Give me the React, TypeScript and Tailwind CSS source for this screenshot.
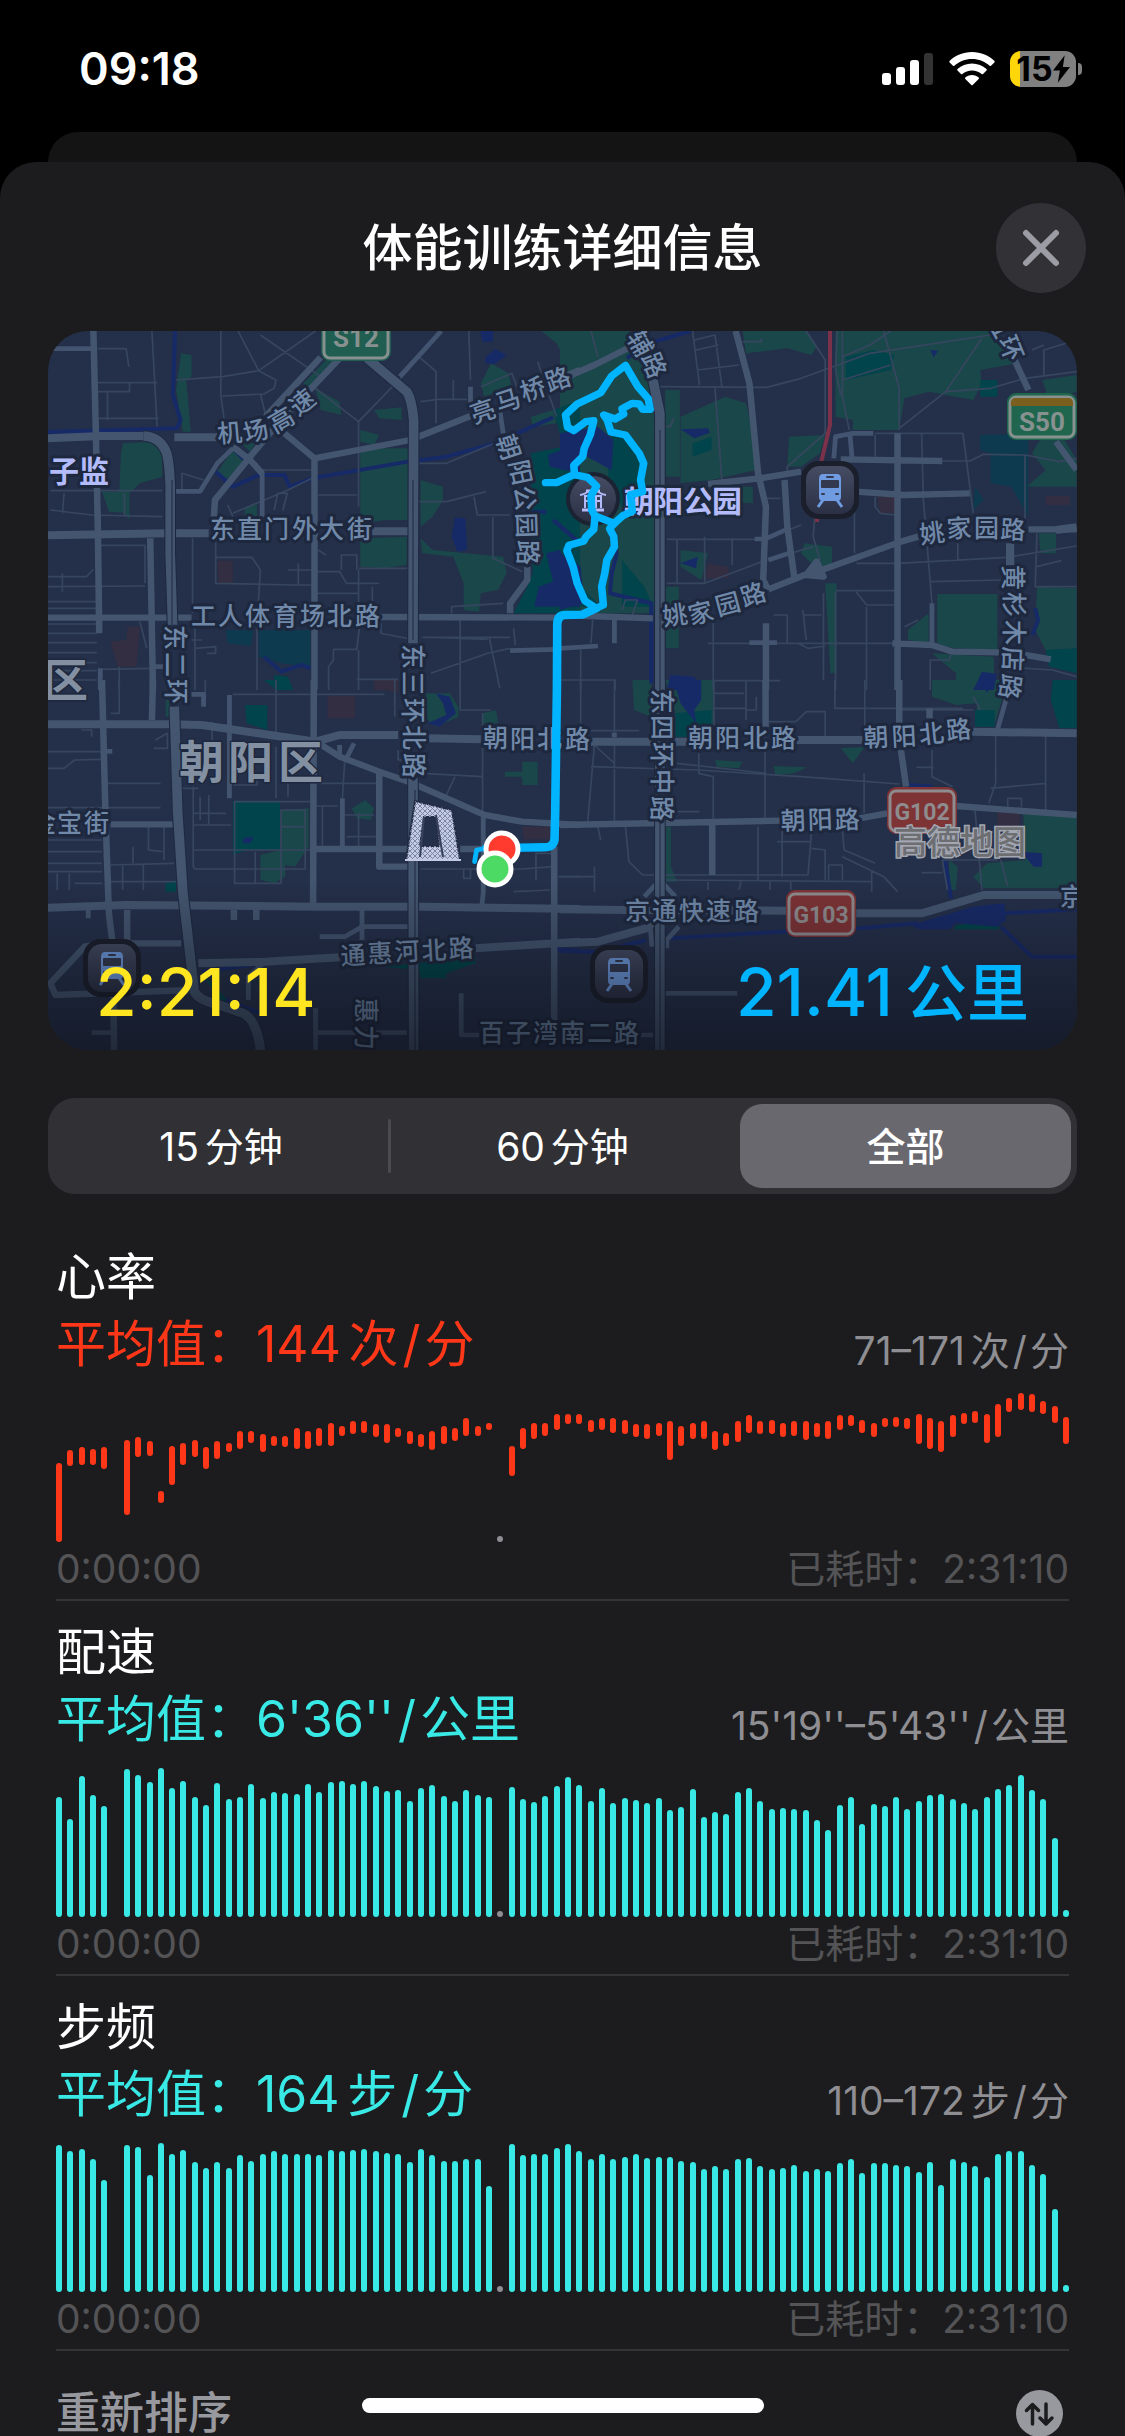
import React, { useState } from "react";

type Range = [number, number] | null | "pause";

const HEART: Range[] = [
  [213, 450], [174, 222], [166, 218], [170, 218], [166, 230], null, [144, 368], [136, 196], [148, 192], [298, 334],
  [161, 278], [152, 218], [144, 196], [166, 230], [148, 200], [152, 180], [118, 170], [118, 153], [127, 179], [131, 162],
  [131, 166], [109, 170], [118, 170], [109, 162], [92, 162], [101, 132], [88, 127], [88, 123], [96, 136], [96, 153],
  [109, 136], [118, 157], [127, 166], [118, 174], [101, 157], [109, 148], [79, 132], [101, 132], [92, 115], "pause",
  [161, 252], [109, 171], [92, 140], [92, 132], [66, 115], [66, 97], [66, 97], [84, 119], [79, 115], [79, 124],
  [84, 127], [96, 136], [96, 141], [92, 132], [88, 205], [101, 162], [92, 141], [88, 141], [118, 175], [122, 162],
  [88, 149], [70, 124], [88, 127], [84, 127], [92, 136], [88, 132], [88, 145], [92, 136], [88, 141], [70, 115],
  [70, 102], [84, 124], [92, 136], [79, 106], [75, 106], [79, 111], [66, 157], [79, 171], [88, 179], [70, 136],
  [62, 97], [58, 93], [66, 153], [36, 136], [19, 59], [2, 55], [6, 59], [28, 67], [41, 93], [75, 157],
];

// 0 marks a missing sample, -1 a pause
const PACE = [
  360, 293, 423, 367, 332, 0, 445, 425, 405, 448, 386, 408, 359, 335, 401, 353, 359, 398, 357, 376,
  372, 370, 398, 376, 406, 409, 398, 409, 392, 378, 381, 348, 388, 395, 362, 347, 381, 367, 359, -1,
  391, 355, 346, 362, 393, 421, 395, 347, 388, 341, 357, 350, 341, 356, 321, 331, 383, 301, 314, 310,
  376, 386, 349, 323, 327, 324, 320, 290, 260, 335, 359, 278, 340, 332, 361, 325, 349, 367, 368, 355,
  343, 323, 361, 383, 395, 427, 380, 353, 237, 20,
];

const CADENCE = [
  440, 422, 428, 398, 335, 0, 441, 434, 351, 448, 415, 426, 389, 373, 389, 373, 410, 394, 414, 423,
  414, 415, 414, 410, 426, 423, 426, 428, 423, 418, 415, 389, 428, 410, 394, 394, 398, 398, 317, -1,
  444, 410, 414, 415, 431, 444, 422, 398, 414, 398, 406, 415, 401, 406, 406, 394, 389, 369, 377, 369,
  398, 401, 377, 369, 373, 381, 364, 368, 364, 386, 398, 356, 386, 386, 381, 377, 360, 389, 321, 398,
  389, 377, 344, 414, 422, 422, 381, 353, 248, 20,
];

const FULL = 450;

function toRanges(heights: number[]): Range[] {
  return heights.map((h) => (h === 0 ? null : h < 0 ? "pause" : [FULL - h, FULL]));
}

function BarChart({ data, barClass }: { data: Range[]; barClass: string }) {
  return (
    <div className="mt-3.5 flex h-[150px] justify-between" aria-hidden="true">
      {data.map((r, i) => {
        if (r === null) return <span key={i} className="w-1.5" />;
        if (r === "pause")
          return <span key={i} className="h-1.5 w-1.5 self-end rounded-full bg-[#8e8e93]" />;
        return (
          <span key={i} className="flex w-1.5 flex-col">
            <span style={{ height: `${(r[0] / FULL) * 100}%` }} />
            <span
              className={`w-1.5 rounded-full ${barClass}`}
              style={{ height: `${((r[1] - r[0]) / FULL) * 100}%` }}
            />
          </span>
        );
      })}
    </div>
  );
}

// A figure with its unit; the unit's parts around a slash get a little air.
function Reading({ value, unit, per }: { value: string; unit?: string; per: string }) {
  return (
    <>
      {value}
      {unit && <span className="ml-[0.15em]">{unit}</span>}
      <span className="mx-[0.08em]">/</span>
      {per}
    </>
  );
}

interface MetricProps {
  title: string;
  average: string;
  range: string;
  unit?: string;
  per: string;
  data: Range[];
  textClass: string;
  barClass: string;
}

function Metric({ title, average, range, unit, per, data, textClass, barClass }: MetricProps) {
  return (
    <section className="mb-[18px] border-b-2 border-[#343437]">
      <h2 className="text-[50px] leading-[66px] text-white">{title}</h2>
      <div className="flex items-end justify-between">
        <p className={`text-[50px] leading-[68px] ${textClass}`}>
          平均值：
          <Reading value={average} unit={unit} per={per} />
        </p>
        <p className="text-[39px] leading-[54px] text-[#8e8e93]">
          <Reading value={range} unit={unit} per={per} />
        </p>
      </div>
      <BarChart data={data} barClass={barClass} />
      <div className="flex justify-between pb-[3px] text-[39px] leading-[54px] text-[#545457]">
        <span>0:00:00</span>
        <span>已耗时：2:31:10</span>
      </div>
    </section>
  );
}

interface Tile {
  x: number;
  y: number;
  park: string;
  wood: string;
  pond: string;
  built: string;
  lake: string;
  river: string;
  lanes: string;
  small: string;
  medium: string;
  large: string;
  ring: string;
}

const TILES: Tile[] = [
  {
    x: 40,
    y: 320,
    park: "M410 100L440 105V170L425 180L438 335H415L395 210ZM240 370L330 365L355 390V470L290 490L260 520V600L245 578L200 575L180 515H230L235 400ZM560 390L592 425L540 482L512 460ZM800 205L870 245L875 285L815 270ZM970 270L1050 262V300L985 295ZM930 330L985 345L970 375L930 365ZM930 385H1068V600H1000L930 612ZM930 655L1065 650V735L1000 745L930 740ZM1105 480L1170 500V540L1140 590L1105 620ZM1105 655L1140 690L1345 710L1355 760L1330 810L1280 820L1275 875L1230 870V790L1200 710L1110 700ZM1455 33H1568V120L1530 130L1500 70ZM1280 190L1310 130L1360 160L1370 200L1290 230ZM1425 290L1490 270L1500 310L1430 320ZM595 560L630 555V590H595ZM765 190L830 120L860 120L780 210ZM585 370L625 370L610 395Z",
    wood: "M1490 270L1568 240V880H1375L1420 790L1430 760L1425 400L1520 380ZM680 1065L720 1070L735 1110H680Z",
    pond: "M540 930L620 930L612 978L545 970ZM635 930H785V1040L700 1030L635 1010Z",
    built: "M515 722H560V790H518ZM255 920H290L280 1040H225L205 965L250 960ZM970 1085H1040V1110H970Z",
    lake: "M1205 592L1235 595L1240 690L1212 695L1195 650ZM1295 110L1322 88L1355 105L1320 132L1292 130ZM1278 33H1315V65H1285ZM1475 405L1568 370V460L1480 440ZM1470 700L1510 690L1568 830V860L1435 860L1448 800L1490 785Z",
    river: "M392 33L386 225L408 300L398 325L23 336M510 455L560 500L635 465H710L725 500L790 475L1068 425L1180 410L1320 370L1490 292M650 1010L700 1055L760 1035L785 1045M560 385L605 430M1430 575H1470M1490 600L1568 670",
    lanes: "M168 86H250L258 140M325 33L340 320M525 33V225L535 300M395 180L530 170L635 152L575 33M635 152L800 33M635 152L685 180L680 205L650 222L530 228M640 222L655 285M640 45L815 170M168 188H340M168 215H260V190M196 215V300M168 295H345M800 205L925 305L1070 150M925 305V560M412 512V460L475 480M30 512H355M65 580L70 520M30 570L150 585L355 590M245 590V520M168 676H305V790M443 655V880M510 660V790L740 795H790M510 712L615 712L640 750L632 880M808 525H920M808 690L830 705M875 750V705H920V750M720 750H790M750 730V795M805 820H925M925 745H1070M805 755H870L890 790H985M925 750V880M965 800V870M23 770H135L155 748M23 800L305 798M65 760V815M23 845H165M23 865H165M23 912H165M23 940H165M23 968H165M23 998H165M23 1028H165M23 1052H165M23 1080H165M290 905L310 985M180 1048L325 1045M230 1040V1110M450 910V1110M440 960H470M630 920V1110M450 985L510 980V1000H485M852 988H920L930 900M852 988V1020L838 1040V1110M920 1078H1040M925 990V1110M1110 952H1365M1220 900V1110M1135 1060L1300 1000L1365 985M1305 955L1335 1105M1140 952L1300 958M1100 545H1180L1295 515M1260 530L1270 585H1365M1315 590V715L1400 755M1245 33L1250 180M1100 110L1150 155V310M1105 245L1155 238H1240M1200 180V240M1280 200L1370 160L1385 200M1445 125L1500 290M1100 430H1180L1260 395L1320 370M1375 925L1380 975M1195 880V860L1345 850M645 450H790M560 580L720 510L790 475M680 570L690 520H718L705 572M545 555L560 590M990 910V940L1090 960",
    small: "M35 86H150M1250 200V260M560 385L515 430L465 514H390M1365 992L1500 988M175 1045V1110M328 1040H360M1045 170L1165 33M1335 270L1345 340M645 455V590",
    medium: "M155 33L162 330L168 630L172 940M320 655L328 1110M870 115L700 300L610 410L508 540L505 590M815 112L655 290M710 340L797 415V1110M797 415L1075 360L1250 288M560 380L610 420L645 460M1415 740V780L1365 850V880M1520 170L1568 150M23 893H440M985 891L1500 893",
    large: "M23 355L180 348H310M390 352H515M23 646L365 640L490 640M960 634H1070",
    ring: "M300 348Q350 350 368 400Q376 430 378 500V700L385 915M950 115L1065 215Q1080 240 1085 300L1083 970",
  },
  {
    x: 560,
    y: 320,
    park: "M0 33H200L270 180L285 300V880H0ZM305 210H348V470H305ZM350 290L480 230L540 250L560 340L570 450L440 480L350 490ZM530 33H715L745 80L730 105L660 85L540 100ZM800 33H1260L1330 130L1220 150L1225 190L1200 240L1070 215L1000 235L985 330L850 330L850 300L800 290V140ZM665 350L770 345L755 400L700 440L660 440ZM1355 500L1410 450L1370 400L1400 350H1460L1500 420V500ZM1390 640H1440V700H1395ZM710 670L790 680V740L750 750L700 700ZM1095 822H1270V990L1140 985L1095 970ZM350 690L430 700L410 780L350 740ZM470 500H560V550L480 545ZM770 790H803V1060H785ZM1385 800L1500 805V1050L1420 1010L1380 930ZM1010 930L1070 880V970L1010 960ZM1080 1000L1260 1010V1110H1150V1060ZM308 800H345V985H308ZM1400 180L1500 165V215L1420 240Z",
    wood: "M0 270L60 320L0 360ZM140 350L190 350L235 430L240 500L180 560L140 480ZM830 110L910 90L970 105L960 150L830 180ZM180 720L245 800L270 860H180ZM385 370L440 350V390L385 410ZM1410 990L1500 985V1060L1420 1040ZM1220 180H1270V230H1220ZM50 790L120 860H0V600L30 660Z",
    pond: "M1220 345L1360 340V590L1310 500L1250 490V400L1220 390ZM1205 500L1230 540L1200 570Z",
    built: "M1410 528H1480V555H1410ZM920 530H975V580H930ZM430 730L490 740V775H420Z",
    lake: "M0 340L110 320L155 360L150 450L60 400L0 440ZM0 700L60 740L70 850L0 870ZM350 328L430 325L435 338L390 355ZM320 1065L390 1070L410 1110H310ZM1225 1055L1268 1062L1260 1110H1200ZM1075 90L1098 92L1085 112ZM350 730L400 710L395 745Z",
    river: "M145 640L165 700L150 760L145 820L265 850V1090M195 115L240 75L380 33M1380 865L1388 900L1372 945",
    lanes: "M290 200L600 202L700 175L820 130L900 100L1250 45M820 33V230L840 330M805 33L800 150L815 225M820 180L960 135M820 110L900 75L960 33M940 33L985 205V330M985 325L1120 215L1225 55M1120 215L1250 205L1350 175L1500 155M450 205L470 480M390 60L450 45L470 200M385 33L405 195M90 33L110 110M715 33L770 120V340L660 440V470M395 90L460 75M400 150L520 135M915 340H1170L1200 580M1050 340L1055 540L1080 850M915 345V410M915 530V560L930 580L975 585M1110 423H1190L1230 403L1350 405L1450 425L1500 415M1350 405V600M855 530V700M860 730H980L1300 712L1500 678M1155 670V720M1385 640L1380 800H1500M1385 740L1455 722M1075 785L1280 780M310 658H570M420 650V790M500 655V735M340 660V790M310 790H420L600 720M600 655L700 615M605 720L735 680M740 590L735 650L755 720M430 970H980M445 890V1110M620 885H660V970M705 870L715 960M705 885H760M765 820V1080M800 815V1110M800 812H975M860 815L890 855H975M890 860V1110M450 1082H640M1000 920L1040 900M1075 1110V1020H1130L1135 1005M1275 1040L1430 1050L1500 1070M95 900L90 970M60 990V1110M0 1080H160V1110M180 870L190 840H225L210 885M1405 165V90L1500 60M1370 90L1405 75M600 535H640M530 65H585V55M270 315L320 320L330 295M690 970L720 985L770 978",
    small: "M600 655L655 630M605 720L665 700M795 415L800 350L850 340H910M842 345L848 415M158 900V970M0 985L110 978M550 968H630M565 657H600M1080 850V975",
    medium: "M0 180L100 135L225 70M510 33L550 190L575 460L598 560L590 780L605 810M430 492L580 475L700 455M605 808L710 765L760 750L990 665L1040 650M652 480L660 620L680 770M815 418L1110 423M860 515L1000 525L1190 520M980 340V1110M1360 628H1500M1320 120L1360 210M1440 365L1500 450M0 885L270 895M598 910V1110M965 970L1080 975L1140 995L1275 997M1350 1005L1425 1018M715 765L745 725L765 770Z",
    large: "M1307 670V735M1440 630L1500 622",
    ring: "M268 170L290 280V1110",
  },
  {
    x: 40,
    y: 680,
    park: "M700 390L780 385V500L740 560L712 555V590L680 610L640 600V525L700 510ZM905 385L945 360L970 385L960 420L920 415ZM1120 40H1190L1215 80V110L1150 140L1125 120ZM1285 100L1325 90L1330 130H1285ZM1350 275H1400V245H1445V315H1400V290H1350ZM365 60L375 60V110H365Z",
    wood: "M595 75H660V150L600 130ZM560 362H697V510H600L560 525ZM1000 860L1265 830V850L1180 880V895H1105L1100 870ZM470 880L545 960L580 995L520 960ZM365 610L395 600V635H365ZM650 0H720L700 25H680Z",
    pond: "M0 0",
    built: "M835 48H915V115H835ZM1400 440H1480V478H1405ZM970 0H1040V40L970 20Z",
    lake: "M590 475L620 470L610 490H590ZM1150 40L1190 50L1208 100L1160 140L1125 130L1180 105L1170 70Z",
    river: "M470 875L655 850M1568 812L1500 808M540 960L640 1000",
    lanes: "M23 215H205M23 265H70L100 240L180 238M195 310H350M23 383H350M315 430V510L355 515M360 440V540M23 480H180M23 515H180M23 550H180M23 575H180M50 580V630M85 580V630M100 610H180M205 555L390 550M205 605H395M240 555V630M270 500V550M300 555V630M445 320V560L450 567H770V390H700V610H565V365H785M445 435H555M445 510H975M465 350V420M445 400H540M490 345V435M685 0V180M560 43H1000M480 0V45M500 125V180M470 135H545M685 200V355M720 180V350M560 315H630V280M885 240L878 355M800 378H865M880 405H970M805 310H980M890 470H975M925 510V400M820 380V500M1030 0V110M1220 0V90H1310M1285 100V400M1205 290L1180 345M1110 280L1285 290M1105 567H1400L1490 560M1230 567V595H1250V567M1440 600V520H1490M1375 635L1480 630M1505 590H1568M625 515V610M205 100H230V0M120 150H150V170M330 205H370V160L335 180M700 440H765M1040 210V240H1130M410 325H460",
    small: "M550 45V355M440 43H475V80M870 195V225M912 190L890 235M878 355V500M1287 400V640L1283 675M655 845L605 890V960M812 770H885L935 740H1070M935 690V780M800 985V1110M150 1058H215M795 1058H1065M1223 940V1065H1275M140 690V715M190 214H210",
    medium: "M180 0L190 400L200 700L212 800L215 1110M328 0L325 120M795 0L793 685M810 190L870 230L985 275L1070 305L1170 350L1290 405L1400 425L1568 435M205 433H390M985 280V560H1070M800 507H1070M1220 507H1290M253 690V790H410M160 795L130 800L30 910L45 945L440 930M563 690V720M628 690V720M1493 500V1030",
    large: "M23 133H375L470 135L800 185L870 165H1040M1120 175L1280 178M23 683L250 675L800 680H1110L1568 687M460 850L655 845L870 832M1265 805L1568 785",
    ring: "M390 80L400 400L415 640L448 935Q460 960 520 975L590 1000Q630 1020 640 1110M1083 295L1085 1110",
  },
  {
    x: 560,
    y: 680,
    park: "M210 0H265V110L215 90ZM305 0H445V130L370 170H335V100ZM1080 0H1300L1260 140H1210V70L1150 75L1080 50ZM815 205L885 200L850 250ZM450 240L530 245L520 265L455 260ZM620 258L718 262L680 280L625 285ZM1345 400H1500V625H1230L1200 590L1240 550L1350 540ZM1130 540L1155 560L1150 630H1130ZM308 440H322V560L340 605H308Z",
    wood: "M1430 0H1500V145H1450L1425 60ZM1205 90H1262V140H1205ZM335 100L440 90V150L370 170H335ZM1150 735L1275 722V748H1145Z",
    pond: "M0 0",
    built: "M1270 395H1335V445H1270Z",
    lake: "M330 0H410V60L390 90L395 130L350 70ZM1020 735L1200 680L1290 670L1295 720L1270 740L1150 730L1130 748H1040ZM1225 0H1255L1240 40ZM1340 515L1400 520V560L1375 560Z",
    river: "M320 775L640 755L870 745L1040 730M1290 700L1500 688M0 812L110 816L250 780M1280 740L1370 830H1500M1118 540L1135 655M1010 315L1080 320",
    lanes: "M60 0V150M158 0V430M90 152H230M90 260L400 270L700 290L985 312M100 195L158 250M100 195L80 430M403 220V280L445 290V430M340 250L600 280M595 150V420M447 85H540M447 40H535M447 0V150M540 0V120M570 50V90H540M605 125H685L715 95H770V170M798 0V85H1170M885 0V160M980 90H1200M883 280V400M1035 262H1085M1080 210V290L1140 320M1200 50L1220 90M1265 160V310L1245 370M1250 325L1410 310M1410 160V400M190 440L200 545L240 585H720L730 460M110 440L118 480M100 560V635M0 590H100M310 600L905 605V570M575 440V600M645 440V590M630 485H725M820 450L825 510L915 550M820 530L940 590L980 635M730 505L770 510V600M780 600V555H820V600M520 630L525 605M430 605V630M610 605V630M670 605V630M905 600V635M1205 390L1225 630M1110 540L1125 630M1280 540L1300 620M1110 540H1270M1050 578H1110M1300 380V355H1340V380M340 395H405",
    small: "M1270 150L1295 60M305 940H515M235 1065H270M150 165H165M245 650L290 600L335 650M262 740L267 800M345 740L310 780V805",
    medium: "M597 0V140M985 0V130M990 210L1005 320M0 435L640 422M870 415L950 400M1150 378L1500 405M442 430V585M1073 85V115",
    large: "M90 185H380M685 180H880M1195 155L1500 160M0 688L190 690L660 692M860 700H1050L1230 645H1460M0 790L110 785L250 745L300 700",
    ring: "M290 0V1110",
  },
];

type Layer = Exclude<keyof Tile, "x" | "y">;

const LAYERS: { key: Layer; fill?: string; stroke?: string; width?: number }[] = [
  { key: "park", fill: "#1a474a" },
  { key: "wood", fill: "#01444b" },
  { key: "pond", fill: "#0e3a50" },
  { key: "built", fill: "#332e42" },
  { key: "lake", fill: "#172a68" },
  { key: "river", stroke: "#172a68", width: 12 },
  { key: "lanes", stroke: "#37465f", width: 5 },
  { key: "small", stroke: "#42546f", width: 14 },
  { key: "medium", stroke: "#43556f", width: 19 },
  { key: "large", stroke: "#43556f", width: 24 },
  { key: "ring", stroke: "#1e2940", width: 34 },
  { key: "ring", stroke: "#43556f", width: 28 },
];

type Glyph = [number, number, number];

function along(count: number, x1: number, y1: number, x2: number, y2: number, angle = 0): Glyph[] {
  return Array.from({ length: count }, (_, i) => {
    const t = i / (count - 1);
    return [x1 + (x2 - x1) * t, y1 + (y2 - y1) * t, angle];
  });
}

const ROAD_LABELS: { text: string; at: Glyph[] }[] = [
  { text: "机场高速", at: [[230, 433, -5], [256, 431, -15], [281, 420, -30], [302, 402, -38]] },
  { text: "亮马桥路", at: along(4, 483, 411, 558, 379, -19) },
  { text: "朝阳公园路", at: [[509, 447, 72], [521, 472, 78], [525, 498, 82], [527, 525, 88], [528, 552, 90]] },
  { text: "东直门外大街", at: along(6, 222, 529, 359, 529) },
  { text: "工人体育场北路", at: along(7, 203, 616, 367, 616) },
  { text: "东二环", at: along(3, 175, 637, 176, 691, 90) },
  { text: "东三环北路", at: along(5, 413, 656, 414, 765, 90) },
  { text: "朝阳北路", at: along(4, 495, 738, 577, 739) },
  { text: "朝阳北路", at: along(4, 700, 738, 783, 738) },
  { text: "朝阳北路", at: [[876, 737, -3], [904, 736, -3], [931, 733, -6], [958, 729, -6]] },
  { text: "朝阳路", at: along(3, 793, 820, 847, 819, -2) },
  { text: "东四环中路", at: along(5, 662, 701, 662, 808, 90) },
  { text: "京通快速路", at: along(5, 637, 911, 746, 911) },
  { text: "通惠河北路", at: along(5, 353, 955, 461, 948, -3) },
  { text: "惠力", at: along(2, 366, 1010, 366, 1037, 90) },
  { text: "百子湾南二路", at: along(6, 491, 1033, 626, 1033) },
  { text: "姚家园路", at: [[932, 533, -8], [959, 528, -3], [986, 528, 0], [1013, 529, 3]] },
  { text: "姚家园路", at: [[675, 615, -8], [701, 613, -15], [728, 604, -15], [753, 594, -18]] },
  { text: "黄杉木店路", at: [[1013, 577, 90], [1014, 604, 90], [1014, 632, 90], [1013, 659, 92], [1010, 687, 98]] },
  { text: "五环", at: [[999, 325, 60], [1011, 348, 68]] },
  { text: "辅路", at: [[640, 343, 60], [654, 365, 68]] },
  { text: "金宝街", at: along(3, 43, 823, 96, 823) },
  { text: "京", at: [[1072, 897, 0]] },
];

interface PlacedTextProps {
  text: string;
  at: Glyph[];
  size: number;
  weight: number;
  fill: string;
  halo: string;
  haloWidth: number;
}

// Sets every character around its own centre point, turned by its own angle.
function PlacedText({ text, at, size, weight, fill, halo, haloWidth }: PlacedTextProps) {
  const spots = at.map(([cx, cy, deg]) => {
    const a = (deg * Math.PI) / 180;
    const dx = -size / 2;
    const dy = size * 0.37;
    return {
      x: cx + dx * Math.cos(a) - dy * Math.sin(a),
      y: cy + dx * Math.sin(a) + dy * Math.cos(a),
    };
  });
  return (
    <text
      x={spots.map((s) => Math.round(s.x)).join(" ")}
      y={spots.map((s) => Math.round(s.y)).join(" ")}
      rotate={at.map((g) => g[2]).join(" ")}
      fontSize={size}
      fontWeight={weight}
      fill={fill}
      stroke={halo}
      strokeWidth={haloWidth}
      strokeLinejoin="round"
      paintOrder="stroke"
    >
      {text}
    </text>
  );
}

function Station({ x, y }: { x: number; y: number }) {
  return (
    <g transform={`translate(${x} ${y})`}>
      <rect x="-29" y="-29" width="58" height="58" rx="18" fill="#1b1f2c" />
      <rect x="-24" y="-24" width="48" height="48" rx="14" fill="url(#poi)" />
      <path
        d="M-7 -16H7Q11 -16 11 -11V7Q11 11 7 11H-7Q-11 11 -11 7V-11Q-11 -16 -7 -16Z"
        fill="#6f9be0"
      />
      <rect x="-4" y="-14" width="8" height="2" rx="1" fill="#333a50" />
      <rect x="-9" y="-10" width="18" height="8" rx="1" fill="#333a50" />
      <rect x="-9" y="3" width="4" height="2" rx="1" fill="#333a50" />
      <rect x="5" y="3" width="4" height="2" rx="1" fill="#333a50" />
      <path d="M-7 10L-12 17M7 10L12 17" stroke="#6f9be0" strokeWidth="3" />
    </g>
  );
}

interface ShieldProps {
  x: number;
  y: number;
  label: string;
  fill: string;
  rim: string;
  size: number;
  band?: boolean;
}

function Shield({ x, y, label, fill, rim, size, band }: ShieldProps) {
  return (
    <g transform={`translate(${x} ${y})`}>
      <rect x="-35" y="-24" width="70" height="47" rx="9" fill={fill} />
      <rect x="-32" y="-20" width="64" height="40" rx="6" fill={fill} stroke={rim} strokeWidth="3" />
      {band && <path d="M-31 -11V-14Q-31 -19 -26 -19H26Q31 -19 31 -14V-11Z" fill="#7a5f1f" />}
      <text
        y={band ? 14 : 9}
        textAnchor="middle"
        fontFamily="'Roboto',sans-serif"
        fontWeight="700"
        fontSize={size}
        fill={rim}
      >
        {label}
      </text>
    </g>
  );
}

function RouteMap() {
  return (
    <svg
      viewBox="48 331 1029 719"
      className="block h-auto w-full"
      role="img"
      aria-label="路线地图"
      fontFamily="'Noto Sans CJK SC',sans-serif"
    >
      <defs>
        <linearGradient id="shade" x1="0" y1="0" x2="0" y2="1">
          <stop offset="0" stopColor="#0b0e16" stopOpacity="0" />
          <stop offset="1" stopColor="#0b0e16" stopOpacity="0.6" />
        </linearGradient>
        <linearGradient id="poi" x1="0" y1="0" x2="0" y2="1">
          <stop offset="0" stopColor="#454c63" />
          <stop offset="1" stopColor="#2b3045" />
        </linearGradient>
        <pattern id="lattice" width="5" height="5" patternUnits="userSpaceOnUse">
          <path d="M0 0L5 5M5 0L0 5" stroke="#7c85a3" strokeWidth="1" />
        </pattern>
      </defs>
      <rect x="48" y="331" width="1029" height="719" fill="#242f49" />
      {LAYERS.map((layer, i) => (
        <g
          key={i}
          fill={layer.fill ?? "none"}
          stroke={layer.stroke ?? "none"}
          strokeWidth={layer.width}
          strokeLinejoin="round"
        >
          {TILES.map((tile) => (
            <path
              key={`${tile.x}-${tile.y}`}
              d={tile[layer.key]}
              transform={`translate(${tile.x} ${tile.y}) scale(0.3444 0.3333)`}
            />
          ))}
        </g>
      ))}
      <path d="M830 331V425L821 463M817 515V522" stroke="#7b3149" strokeWidth="4" fill="none" />
      <path d="M660 430V1050M172 480V625M413 480V640M415 790V1050" stroke="#1e2940" strokeWidth="1" fill="none" />

      {ROAD_LABELS.map((l, i) => (
        <PlacedText key={i} {...l} size={25} weight={500} fill="#7089a9" halo="#1d273d" haloWidth={6} />
      ))}
      <PlacedText text="区" at={[[65, 680, 0]]} size={45} weight={700} fill="#8290a2" halo="#1d273d" haloWidth={3} />
      <PlacedText text="朝阳区" at={along(3, 201, 762, 300, 762)} size={45} weight={700} fill="#8290a2" halo="#1d273d" haloWidth={3} />
      <PlacedText text="子监" at={along(2, 64, 471, 94, 471)} size={30} weight={700} fill="#b3bbfb" halo="#1d273d" haloWidth={6} />

      <g transform="translate(593 499)">
        <circle r="27" fill="#1b2333" />
        <circle r="23" fill="url(#poi)" />
      </g>
      <g transform="translate(593 499)" fill="none" stroke="#b3bbfb" strokeWidth="2">
        <path d="M-13 -4Q-7 -5 -5 -8H5Q7 -5 13 -4M-9 -3H9M-8 -3V9M-3 -3V9M3 -3V9M8 -3V9M-9 2H9" />
        <path d="M-11 11H11" strokeWidth="3" />
        <path d="M-7 -8H7" strokeWidth="3" />
      </g>
      <PlacedText text="朝阳公园" at={along(4, 639, 501, 727, 501)} size={30} weight={700} fill="#b3bbfb" halo="#1d2a3d" haloWidth={6} />

      <Station x={830} y={490} />
      <Station x={112} y={968} />
      <Station x={619} y={974} />

      <Shield x={356} y={338} label="S12" fill="#205e51" rim="#87918f" size={26} />
      <Shield x={1042} y={417} label="S50" fill="#20664f" rim="#87918f" size={26} band />
      <Shield x={922} y={811} label="G102" fill="#7e3335" rim="#8f8c8f" size={23} />
      <Shield x={821} y={914} label="G103" fill="#7e3335" rim="#8f8c8f" size={23} />
      <text
        x="894"
        y="854"
        fontSize="33"
        fontWeight="500"
        fill="#6c6e72"
        stroke="#a3a7b2"
        strokeWidth="3"
        paintOrder="stroke"
      >
        高德地图
      </text>

      <g transform="translate(405 801)">
        <path d="M10 0L47 9L55 59H1ZM19 16L15 45H34L31 16Z" fill="#c4cbe4" fillRule="evenodd" stroke="#232d44" strokeWidth="2" />
        <path d="M10 0L47 9L55 59H1ZM19 16L15 45H34L31 16Z" fill="url(#lattice)" fillRule="evenodd" />
        <path d="M31 14L38 56M19 16L15 56" stroke="#39425c" strokeWidth="2" />
        <path d="M0 59H56" stroke="#c4cbe4" strokeWidth="2" />
      </g>

      <rect x="48" y="880" width="1029" height="170" fill="url(#shade)" />

      <g
        transform="translate(560 320) scale(0.3444 0.3333)"
        fill="none"
        stroke="#00b4ff"
        strokeWidth="22"
        strokeLinecap="round"
        strokeLinejoin="round"
      >
        <path d="M-42 488H-10L40 464L80 472L106 498L90 528L92 570L102 588L158 610L184 586L210 574L205 524L240 515L234 480L243 430L230 400L190 345L148 336L137 300L127 285L160 297L185 282L180 266L210 250L230 252L240 268L262 268L256 236L226 200L190 136L150 168L118 218L50 252L16 285L22 322L40 332L75 305L98 302L88 344L70 386L66 410L40 436L42 462" />
        <path d="M102 588L98 628L76 650L68 664L26 676L20 692L38 740L50 790L72 842L105 865L126 855L121 800L130 760L136 720L158 680L156 650L144 626L158 610" />
        <path strokeWidth="25" d="M105 865L65 884L15 885Q-8 885 -8 915L-9 1110L-14 1480L-16 1560Q-20 1582 -45 1582L-215 1585" />
        <path strokeWidth="14" d="M-215 1585L-242 1590L-248 1625" />
      </g>
      <circle cx="502" cy="849" r="16" fill="#ff3b30" stroke="#fff" strokeWidth="5" />
      <circle cx="495" cy="869" r="16" fill="#4cd964" stroke="#fff" strokeWidth="5" />
    </svg>
  );
}

function StatusBar() {
  return (
    <div className="flex h-[132px] items-start justify-between pt-11 pr-[43px] pl-[79px] text-white">
      <time className="text-[45px] leading-[50px] font-semibold">09:18</time>
      <div className="flex h-[50px] items-center gap-[15px]">
        <svg width="52" height="36" viewBox="0 0 52 36" aria-label="信号">
          <rect x="0" y="22" width="9" height="12" rx="3" fill="#fff" />
          <rect x="14" y="16" width="9" height="18" rx="3" fill="#fff" />
          <rect x="28" y="9" width="9" height="25" rx="3" fill="#fff" />
          <rect x="42" y="2" width="9" height="32" rx="3" fill="#333" />
        </svg>
        <svg width="46" height="34" viewBox="0 0 46 34" fill="#fff" aria-label="无线局域网">
          <path d="M23 0C32 0 40 3.500 45.500 9Q46 9.700 45.400 10.400L42 13.800Q41.300 14.400 40.600 13.800C36 9.500 29.800 7 23 7C16.200 7 10 9.500 5.400 13.800Q4.700 14.400 4 13.800L.6 10.400Q0 9.700 .5 9C6 3.500 14 0 23 0Z" />
          <path d="M23 11.500C28.600 11.500 33.700 13.600 37.500 17.100Q38.200 17.800 37.500 18.500L34 22Q33.300 22.600 32.600 22C30 19.700 26.700 18.400 23 18.400C19.300 18.400 16 19.700 13.400 22Q12.700 22.600 12 22L8.500 18.500Q7.800 17.800 8.500 17.100C12.300 13.600 17.400 11.500 23 11.500Z" />
          <path d="M23 23C25.600 23 28 24 29.700 25.500Q30.400 26.200 29.700 26.900L23.700 32.900Q23 33.500 22.300 32.900L16.300 26.900Q15.600 26.200 16.300 25.500C18 24 20.400 23 23 23Z" />
        </svg>
        <div className="flex items-center gap-0.5">
          <div className="flex h-9 w-[66px] items-center justify-center rounded-[11px] bg-linear-to-r from-[#ffd60a] from-15% to-[#808080] to-15% text-[34px] leading-9 font-bold text-black">
            15
            <svg width="17" height="28" viewBox="0 0 16 26" aria-hidden="true">
              <path d="M11 0L0 14.500H6.500L4.500 26L16 11H9.300Z" fill="#000" />
            </svg>
          </div>
          <div className="h-3 w-1 rounded-r-full bg-[#808080]" />
        </div>
      </div>
    </div>
  );
}

const SPANS = [
  { count: "15", unit: "分钟" },
  { count: "60", unit: "分钟" },
  { count: "", unit: "全部" },
];

function SpanPicker() {
  const [active, setActive] = useState(2);
  return (
    <div className="mt-12 grid h-24 grid-cols-3 rounded-[27px] bg-[#313135]" role="group" aria-label="时间范围">
      {SPANS.map(({ count, unit }, i) => (
        <div key={count + unit} className="flex items-center p-1.5">
          <button
            type="button"
            aria-pressed={active === i}
            onClick={() => setActive(i)}
            className={`h-full flex-1 rounded-[22px] text-[39px] leading-none text-white ${
              active === i ? "bg-[#69686f] font-medium" : ""
            }`}
          >
            {count && <span className="mr-[0.15em]">{count}</span>}
            {unit}
          </button>
          {i < 2 && active !== i && active !== i + 1 && <span className="-mr-1.5 h-[54px] w-[3px] rounded-full bg-[#4a4a4f]" />}
        </div>
      ))}
    </div>
  );
}

export default function App() {
  return (
    <div className="relative flex min-h-screen flex-col overflow-hidden bg-black font-['Inter','Noto_Sans_CJK_SC',sans-serif]">
      <StatusBar />
      <div className="mx-12 h-[30px] rounded-t-[30px] bg-[#141414]" />
      <main className="flex-1 rounded-t-[36px] bg-[#1c1c1e]">
        <header className="grid h-[169px] grid-cols-[1fr_auto_1fr] items-start px-[39px] pt-[41px]">
          <span />
          <h1 className="text-[50px] leading-[90px] font-medium text-white">体能训练详细信息</h1>
          <button
            type="button"
            aria-label="关闭"
            className="flex h-[90px] w-[90px] items-center justify-center justify-self-end rounded-full bg-[#313136]"
          >
            <svg width="38" height="38" viewBox="0 0 38 38" aria-hidden="true">
              <path d="M4 4L34 34M34 4L4 34" stroke="#9c9ca4" strokeWidth="6" strokeLinecap="round" />
            </svg>
          </button>
        </header>
        <div className="px-12">
          <div className="relative overflow-hidden rounded-[40px]">
            <RouteMap />
            <div className="absolute inset-x-0 bottom-0 flex items-baseline justify-between px-12 pb-4 text-[66px] leading-[80px] font-medium">
              <span className="text-[#ffe620]">2:21:14</span>
              <span className="text-[#00b4ff]">
                21.41<span className="ml-3 text-[62px]">公里</span>
              </span>
            </div>
          </div>
          <SpanPicker />
        </div>
        <div className="mt-[50px] px-14">
          <Metric
            title="心率"
            average="144"
            range="71–171"
            unit="次"
            per="分"
            data={HEART}
            textClass="text-[#ff3719]"
            barClass="bg-[#ff3719]"
          />
          <Metric
            title="配速"
            average="6'36''"
            range="15'19''–5'43''"
            per="公里"
            data={toRanges(PACE)}
            textClass="text-[#39e9e5]"
            barClass="bg-[#39e9e5]"
          />
          <Metric
            title="步频"
            average="164"
            range="110–172"
            unit="步"
            per="分"
            data={toRanges(CADENCE)}
            textClass="text-[#39e9e5]"
            barClass="bg-[#39e9e5]"
          />
          <button
            type="button"
            className="mt-[38px] flex h-12 w-full items-center justify-between pr-1.5 text-[44px] leading-[48px] font-medium text-[#98989f]"
          >
            重新排序
            <svg width="47" height="47" viewBox="0 0 47 47" aria-hidden="true">
              <circle cx="23.500" cy="23.500" r="23.500" fill="#98989f" />
              <path
                d="M16.500 34V15M10.500 20.500L16.500 14.500L22.500 20.500M30 14V33M24 28L30 34L36 28"
                fill="none"
                stroke="#1c1c1e"
                strokeWidth="3.500"
                strokeLinecap="round"
                strokeLinejoin="round"
              />
            </svg>
          </button>
        </div>
      </main>
      <div className="absolute inset-x-0 bottom-6 mx-auto h-[15px] w-[402px] rounded-full bg-white" />
    </div>
  );
}
